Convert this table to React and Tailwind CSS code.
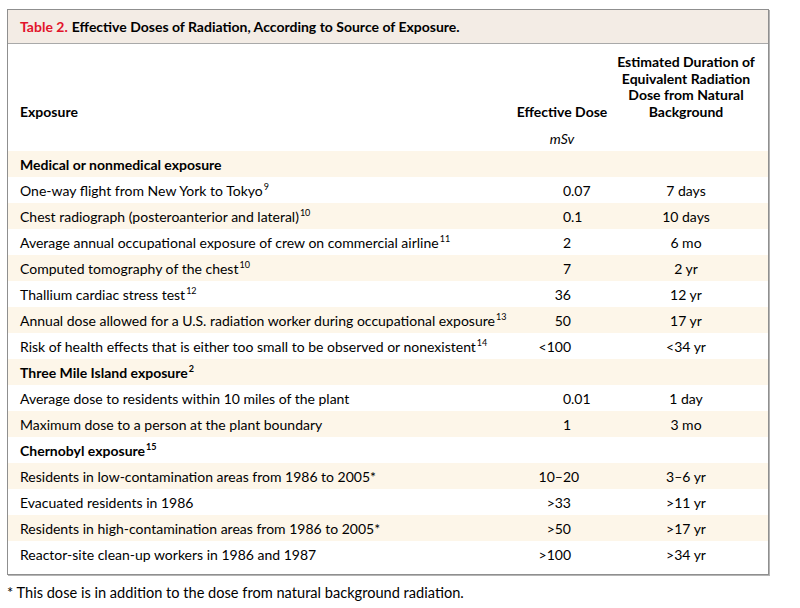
import React from "react";

const rows = [
  { section: true, label: "Medical or nonmedical exposure" },
  { label: "One-way flight from New York to Tokyo", sup: "9", i: "0", f: ".07", d: "7 days" },
  { label: "Chest radiograph (posteroanterior and lateral)", sup: "10", i: "0", f: ".1", d: "10 days" },
  { label: "Average annual occupational exposure of crew on commercial airline", sup: "11", i: "2", f: "", d: "6 mo" },
  { label: "Computed tomography of the chest", sup: "10", i: "7", f: "", d: "2 yr" },
  { label: "Thallium cardiac stress test", sup: "12", i: "36", f: "", d: "12 yr" },
  { label: "Annual dose allowed for a U.S. radiation worker during occupational exposure", sup: "13", i: "50", f: "", d: "17 yr" },
  { label: "Risk of health effects that is either too small to be observed or nonexistent", sup: "14", i: "<100", f: "", d: "<34 yr" },
  { section: true, label: "Three Mile Island exposure", sup: "2" },
  { label: "Average dose to residents within 10 miles of the plant", i: "0", f: ".01", d: "1 day" },
  { label: "Maximum dose to a person at the plant boundary", i: "1", f: "", d: "3 mo" },
  { section: true, label: "Chernobyl exposure", sup: "15" },
  { label: "Residents in low-contamination areas from 1986 to 2005*", i: "10–2", f: "0", d: "3–6 yr" },
  { label: "Evacuated residents in 1986", i: ">33", f: "", d: ">11 yr" },
  { label: "Residents in high-contamination areas from 1986 to 2005*", i: ">50", f: "", d: ">17 yr" },
  { label: "Reactor-site clean-up workers in 1986 and 1987", i: ">100", f: "", d: ">34 yr" },
];

export default function App() {
  return (
    <div
      className="w-[800px] h-[608px] bg-white text-[14px] text-black"
      style={{ fontFamily: "Lato, 'Liberation Sans', sans-serif" }}
    >
      <div className="pt-[9px] pl-[7px]">
        <div className="w-[762px] border border-[#8f8f8f] shadow-[1px_1px_0_#b5b5b5] bg-white">
          <div className="h-[34px] bg-[#f3ece5] border-b border-[#a9a9a9] flex items-center pl-[12px] font-bold">
            <span className="text-[#e2132b]">Table 2.</span>
            <span className="ml-[4px]">Effective Doses of Radiation, According to Source of Exposure.</span>
          </div>
          <div className="grid grid-cols-[492px_100px_148px] pl-[12px] pt-[10px] items-end font-bold leading-[16.6px]">
            <div>Exposure</div>
            <div className="text-center">Effective Dose</div>
            <div className="text-center">
              Estimated Duration of
              <br />
              Equivalent Radiation
              <br />
              Dose from Natural
              <br />
              Background
            </div>
          </div>
          <div className="grid grid-cols-[492px_100px_148px] pl-[12px] h-[26px] mt-[5px] items-center">
            <div></div>
            <div className="text-center italic">mSv</div>
            <div></div>
          </div>
          <div className="pb-[7px]">
            {rows.map((r, idx) => (
              <div
                key={idx}
                className={
                  "grid grid-cols-[492px_100px_148px] pl-[12px] h-[26px] items-center " +
                  (idx % 2 === 0 ? "bg-[#fdf6e9]" : "bg-white")
                }
              >
                <div className={r.section ? "font-bold" : ""}>
                  {r.label}
                  {r.sup && (
                    <sup className="text-[9px] ml-[1px] top-[-6px]">{r.sup}</sup>
                  )}
                </div>
                <div className="flex">
                  {!r.section && (
                    <>
                      <span className="w-[59px] text-right">{r.i}</span>
                      <span>{r.f}</span>
                    </>
                  )}
                </div>
                <div className="text-center">{r.d}</div>
              </div>
            ))}
          </div>
        </div>
      </div>
      <div className="pl-[7px] mt-[7px] text-[14.6px]">* This dose is in addition to the dose from natural background radiation.</div>
    </div>
  );
}
